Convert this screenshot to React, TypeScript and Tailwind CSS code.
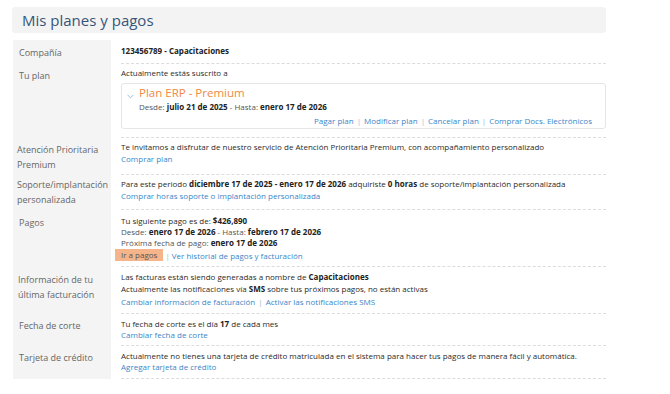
import React from "react";

const Sep = () => <span className="text-[#9fb6cc] mx-[3px]">|</span>;
const A = ({ children }: { children: React.ReactNode }) => (
  <span className="text-[#3a86c8]">{children}</span>
);

function Row({
  label,
  labelCls,
  contentCls,
  children,
}: {
  label: React.ReactNode;
  labelCls: string;
  contentCls: string;
  children: React.ReactNode;
}) {
  return (
    <div className="flex">
      <div
        className={`w-[98px] shrink-0 bg-[#f4f4f4] text-[9px] leading-[15px] text-[#666] ${labelCls}`}
      >
        {label}
      </div>
      <div
        className={`ml-[10px] w-[485px] border-b border-dashed border-[#dcdcdc] text-[8px] text-[#2a2a2a] ${contentCls}`}
      >
        {children}
      </div>
    </div>
  );
}

export default function App() {
  return (
    <div className="w-[670px] h-[394px] bg-white font-['Open_Sans',sans-serif]">
      <div className="pt-[7px] pl-[12px]">
        <div className="w-[594px] h-[26px] bg-[#f3f3f3] rounded-[3px] flex items-center pl-[10px]">
          <h1 className="text-[15px] leading-[20px] text-[#36557a]">Mis planes y pagos</h1>
        </div>
      </div>
      <div className="mt-[7px] ml-[13px] w-[593px]">
        <Row label="Compañía" labelCls="pl-[6px] pt-[5px]" contentCls="pt-[5px] pb-[6px] leading-[12px]">
          <b className="text-[#222]">123456789 - Capacitaciones</b>
        </Row>
        <Row label="Tu plan" labelCls="pl-[6px] pt-[4px]" contentCls="pt-[3px] pb-[8px] leading-[12px]">
          <div>Actualmente estás suscrito a</div>
          <div className="mt-[4px] h-[46px] border border-[#e6e6e6] rounded-[3px] pl-[17px] pr-[13px] relative">
            <svg
              className="absolute left-[5px] top-[10px]"
              width="7"
              height="5"
              viewBox="0 0 7 5"
            >
              <path d="M0.5 0.8 L3.5 3.8 L6.5 0.8" fill="none" stroke="#9cc0e0" strokeWidth="1" />
            </svg>
            <div className="text-[11.5px] leading-[16px] text-[#f08a3e] pt-[1px]">Plan ERP - Premium</div>
            <div className="leading-[12px] text-[#555]">
              Desde: <b className="text-[#222]">julio 21 de 2025</b> - Hasta:{" "}
              <b className="text-[#222]">enero 17 de 2026</b>
            </div>
            <div className="leading-[12px] mt-[2px] text-right">
              <A>Pagar plan</A>
              <Sep />
              <A>Modificar plan</A>
              <Sep />
              <A>Cancelar plan</A>
              <Sep />
              <A>Comprar Docs. Electrónicos</A>
            </div>
          </div>
        </Row>
        <Row
          label={
            <>
              Atención Prioritaria
              <br />
              Premium
            </>
          }
          labelCls="pl-[4px] pt-[4px] leading-[14px]"
          contentCls="pt-[3px] pb-[9px] leading-[12px]"
        >
          <div>
            Te invitamos a disfrutar de nuestro servicio de Atención Prioritaria Premium, con acompañamiento
            personalizado
          </div>
          <A>Comprar plan</A>
        </Row>
        <Row
          label={
            <>
              Soporte/implantación
              <br />
              personalizada
            </>
          }
          labelCls="pl-[4px] pt-[2px]"
          contentCls="pt-[3px] pb-[7px] leading-[12px]"
        >
          <div>
            Para este periodo <b className="text-[#222]">diciembre 17 de 2025 - enero 17 de 2026</b> adquiriste{" "}
            <b className="text-[#222]">0 horas</b> de soporte/implantación personalizada
          </div>
          <A>Comprar horas soporte o implantación personalizada</A>
        </Row>
        <Row label="Pagos" labelCls="pl-[6px] pt-[5px]" contentCls="pt-[5px] pb-[5px] leading-[11px]">
          <div>
            Tu siguiente pago es de: <b className="text-[#222]">$426,890</b>
          </div>
          <div>
            <span className="text-[#555]">Desde:</span> <b className="text-[#222]">enero 17 de 2026</b>{" "}
            <span className="text-[#555]">- Hasta:</span> <b className="text-[#222]">febrero 17 de 2026</b>
          </div>
          <div>
            <span className="text-[#555]">Próxima fecha de pago:</span>{" "}
            <b className="text-[#222]">enero 17 de 2026</b>
          </div>
          <div className="mt-[1px] flex items-center h-[12px]">
            <span className="ml-[-6px] bg-[#f6b48b] text-[#555] px-[6px] h-[12px] leading-[12px]">Ir a pagos</span>
            <span className="text-[#9fb6cc] mx-[2px]">|</span>
            <A>Ver historial de pagos y facturación</A>
          </div>
        </Row>
        <Row
          label={
            <>
              Información de tu
              <br />
              última facturación
            </>
          }
          labelCls="pl-[5px] pt-[5px]"
          contentCls="pt-[4px] pb-[5px] leading-[12px]"
        >
          <div>
            Las facturas están siendo generadas a nombre de <b className="text-[#222]">Capacitaciones</b>
          </div>
          <div>
            Actualmente las notificaciones vía <b className="text-[#222]">SMS</b> sobre tus próximos pagos, no están
            activas
          </div>
          <div className="mt-[1px]">
            <A>Cambiar información de facturación</A>
            <Sep />
            <A>Activar las notificaciones SMS</A>
          </div>
        </Row>
        <Row label="Fecha de corte" labelCls="pl-[6px] pt-[4px]" contentCls="pt-[4px] pb-[5px] leading-[11px]">
          <div>
            Tu fecha de corte es el día <b className="text-[#222]">17</b> de cada mes
          </div>
          <A>Cambiar fecha de corte</A>
        </Row>
        <Row label="Tarjeta de crédito" labelCls="pl-[6px] pt-[4px]" contentCls="pt-[4px] pb-[6px] leading-[11px]">
          <div>
            Actualmente no tienes una tarjeta de crédito matriculada en el sistema para hacer tus pagos de manera
            fácil y automática.
          </div>
          <A>Agregar tarjeta de crédito</A>
        </Row>
      </div>
    </div>
  );
}
